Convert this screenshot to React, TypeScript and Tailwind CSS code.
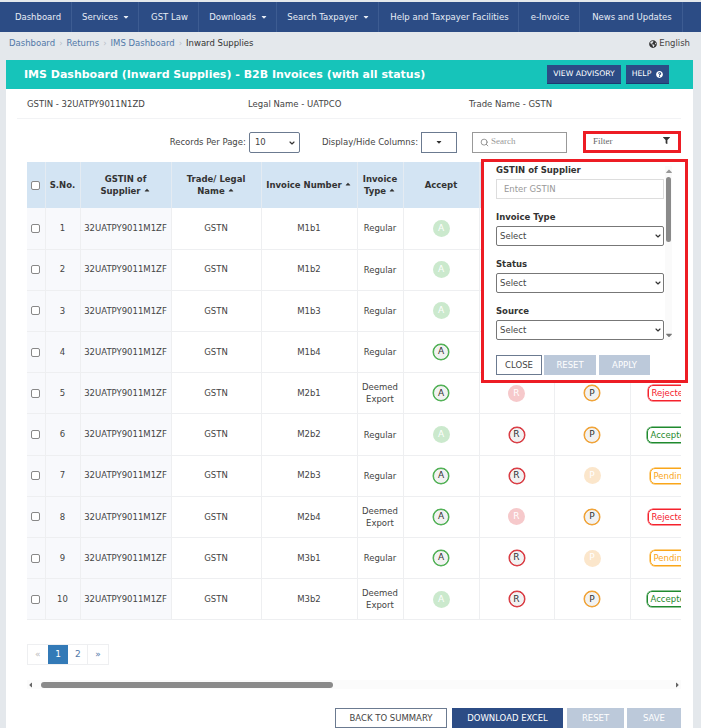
import { FaCaretDown, FaCaretUp, FaFilter, FaGlobeAmericas, FaQuestionCircle } from 'react-icons/fa';
import { ChevronDown, Search } from 'lucide-react';

const navItems = [
  { label: 'Dashboard', width: 'w-[72px] pl-[5px]' },
  { label: 'Services', width: 'w-[67px] pl-[2px]', caret: true },
  { label: 'GST Law', width: 'w-[60px] pl-[2px]' },
  { label: 'Downloads', width: 'w-[78px] pl-[2px]', caret: true },
  { label: 'Search Taxpayer', width: 'w-[102px] pl-[2px]', caret: true },
  { label: 'Help and Taxpayer Facilities', width: 'w-[140px] pl-[2px]' },
  { label: 'e-Invoice', width: 'w-[61px] pl-[2px]' },
  { label: 'News and Updates', width: 'w-[103px] pl-[2px]' },
];

type Row = {
  no: number;
  invoice: string;
  type: string;
  off: 'A' | 'R' | 'P' | '';
  status: 'Rejected' | 'Accepted' | 'Pending' | '';
};

const rows: Row[] = [
  { no: 1, invoice: 'M1b1', type: 'Regular', off: 'A', status: '' },
  { no: 2, invoice: 'M1b2', type: 'Regular', off: 'A', status: '' },
  { no: 3, invoice: 'M1b3', type: 'Regular', off: 'A', status: '' },
  { no: 4, invoice: 'M1b4', type: 'Regular', off: '', status: '' },
  { no: 5, invoice: 'M2b1', type: 'Deemed Export', off: 'R', status: 'Rejected' },
  { no: 6, invoice: 'M2b2', type: 'Regular', off: 'A', status: 'Accepted' },
  { no: 7, invoice: 'M2b3', type: 'Regular', off: 'P', status: 'Pending' },
  { no: 8, invoice: 'M2b4', type: 'Deemed Export', off: 'R', status: 'Rejected' },
  { no: 9, invoice: 'M3b1', type: 'Regular', off: 'P', status: 'Pending' },
  { no: 10, invoice: 'M3b2', type: 'Deemed Export', off: 'A', status: 'Accepted' },
];

const Badge = ({ letter, off }: { letter: 'A' | 'R' | 'P'; off: boolean }) => {
  const on = {
    A: 'border-[#4caf50] ring-[#4caf50]',
    R: 'border-[#d9363e] ring-[#d9363e]',
    P: 'border-[#f0a030] ring-[#f0a030]',
  };
  const faded = {
    A: 'bg-[#cbe9cd]',
    R: 'bg-[#f6c9cb]',
    P: 'bg-[#fbe6cb]',
  };
  if (off) {
    return (
      <span className={`mx-auto flex size-[17px] items-center justify-center rounded-full text-[9px] text-white ${faded[letter]}`}>
        {letter}
      </span>
    );
  }
  return (
    <span className={`mx-auto flex size-[16px] items-center justify-center rounded-full border bg-[#f2f2f2] text-[9px] text-[#333] ring-[0.5px] ${on[letter]}`}>
      {letter}
    </span>
  );
};

const StatusPill = ({ status }: { status: Row['status'] }) => {
  if (status === 'Rejected') {
    return <span className="ml-[17px] block w-[70px] rounded-[5px] border border-[#f5222d] py-[1px] pl-[3px] text-left text-[8.5px] leading-[12px] text-[#f5222d] ring-[0.5px] ring-[#f5222d]">Rejected</span>;
  }
  if (status === 'Accepted') {
    return <span className="ml-[16px] block w-[70px] rounded-[5px] border border-[#1f8a2e] py-[1px] pl-[3px] text-left text-[8.5px] leading-[12px] text-[#1f8a2e] ring-[0.5px] ring-[#1f8a2e]">Accepted</span>;
  }
  if (status === 'Pending') {
    return <span className="ml-[19px] block w-[70px] rounded-[5px] border border-[#faa61a] py-[1px] pl-[3px] text-left text-[8.5px] leading-[12px] text-[#faa61a] ring-[0.5px] ring-[#faa61a]">Pending</span>;
  }
  return null;
};

const Sort = () => <FaCaretUp className="ml-[2px] inline size-[8px] align-baseline text-[#333]" />;

const Select = ({ value, className }: { value: string; className: string }) => (
  <div className={`relative ${className}`}>
    <select className="h-full w-full appearance-none rounded-[2px] border border-[#777] bg-white pl-[3px] text-[8.5px] text-[#444]">
      <option>{value}</option>
    </select>
    <ChevronDown className="pointer-events-none absolute right-[2px] top-[6px] size-[8px] text-[#333]" strokeWidth={3.5} />
  </div>
);

export default function App() {
  return (
    <div className="h-[728px] w-[725px] overflow-hidden bg-white font-['DejaVu_Sans',sans-serif] text-[#444]">
      <div className="h-[728px] w-[701px] bg-[#e4e8ec] pt-[2px]">
        {/* top nav */}
        <nav className="flex h-[30px] bg-[#2c4c85] text-[8.5px] text-[#e8edf5]">
          {navItems.map((item) => (
            <div key={item.label} className={`flex items-center justify-center gap-[4px] border-r border-[#3d5c92] ${item.width}`}>
              {item.label}
              {item.caret && <FaCaretDown className="size-[8px]" />}
            </div>
          ))}
        </nav>

        {/* breadcrumb */}
        <div className="flex h-[26px] items-center justify-between pb-[3px] pl-[9px] pr-[11px] text-[8.5px]">
          <div className="flex items-center gap-[4px] text-[#5178a8]">
            <span>Dashboard</span>
            <span className="text-[#b8c0c8]">›</span>
            <span>Returns</span>
            <span className="text-[#b8c0c8]">›</span>
            <span>IMS Dashboard</span>
            <span className="text-[#b8c0c8]">›</span>
            <span className="text-[#333]">Inward Supplies</span>
          </div>
          <div className="flex items-center gap-[2px] text-[#444]">
            <FaGlobeAmericas className="size-[8px] text-[#333]" />
            English
          </div>
        </div>

        {/* main panel */}
        <div className="relative ml-[6px] mr-[8px] mt-[2px] h-[668px] bg-white">
          <div className="flex h-[29px] items-center justify-between bg-[#16c4ba] pl-[18px] pr-[24px]">
            <h1 className="pt-[1px] text-[11px] font-bold text-white">
              IMS Dashboard (Inward Supplies) - B2B Invoices (with all status)
            </h1>
            <div className="flex gap-[5px] text-[7.7px] text-white">
              <button className="h-[19px] w-[74px] border-b border-[#1c3a70] bg-[#2c4c85]">VIEW ADVISORY</button>
              <button className="flex h-[19px] w-[43px] items-center justify-center gap-[5px] border-b border-[#1c3a70] bg-[#2c4c85]">
                HELP <FaQuestionCircle className="size-[7px]" />
              </button>
            </div>
          </div>

          <div className="ml-[11px] mr-[12px] flex h-[30px] items-center border-b border-[#f2f3f5] pl-[10px] pt-[1px] text-[8.5px]">
            <span className="w-[221px]">GSTIN - 32UATPY9011N1ZD</span>
            <span className="w-[221px]">Legal Name - UATPCO</span>
            <span>Trade Name - GSTN</span>
          </div>

          {/* toolbar */}
          <div className="mr-[12px] mt-[12px] flex h-[22px] items-center justify-end text-[8.5px]">
            <span>Records Per Page:</span>
            <div className="relative ml-[3px] h-[21px] w-[51px]">
              <select className="h-full w-full appearance-none rounded-[2px] border border-[#6b7a90] bg-white pl-[5px] text-[8.5px] text-[#444]">
                <option>10</option>
              </select>
              <ChevronDown className="pointer-events-none absolute right-[4px] top-[7px] size-[8px] text-[#333]" strokeWidth={3.5} />
            </div>
            <span className="ml-[22px]">Display/Hide Columns:</span>
            <button className="ml-[3px] flex h-[21px] w-[36px] items-center justify-center border border-[#6b7a90] bg-white">
              <FaCaretDown className="size-[8px] text-[#333]" />
            </button>
            <div className="ml-[15px] flex h-[21px] w-[95px] items-center gap-[2px] border border-[#999] pl-[7px] font-['Liberation_Serif',serif] text-[9px] text-[#999]">
              <Search className="size-[9px] text-[#777]" />
              Search
            </div>
            <div className="ml-[16px] flex h-[22px] w-[98px] items-center justify-between border-[3px] border-[#ed1c24] pl-[7px] pr-[8px] font-['Liberation_Serif',serif] text-[9px] text-[#666]">
              Filter
              <FaFilter className="mb-[4px] size-[7px] text-[#333]" />
            </div>
          </div>

          {/* table */}
          <div className="ml-[21px] mt-[9px] w-[654px] overflow-hidden">
            <table className="w-[760px] table-fixed border-collapse text-center text-[8.5px]">
              <colgroup>
                <col className="w-[18px]" />
                <col className="w-[35px]" />
                <col className="w-[91px]" />
                <col className="w-[90px]" />
                <col className="w-[96px]" />
                <col className="w-[46px]" />
                <col className="w-[76px]" />
                <col className="w-[75px]" />
                <col className="w-[76px]" />
                <col className="w-[157px]" />
              </colgroup>
              <thead>
                <tr className="h-[46px] bg-[#d3e4f3] font-bold text-[#333]">
                  <th className="border-r border-[#e4ebf2]"><input type="checkbox" className="mx-auto block size-[9px] appearance-none rounded-[2px] border border-[#888] bg-white" /></th>
                  <th className="border-r border-[#e4ebf2]">S.No.</th>
                  <th className="border-r border-[#e4ebf2] leading-[12px]">GSTIN of<br />Supplier<Sort /></th>
                  <th className="border-r border-[#e4ebf2] leading-[12px]">Trade/ Legal<br />Name<Sort /></th>
                  <th className="border-r border-[#e4ebf2]">Invoice Number<Sort /></th>
                  <th className="border-r border-[#e4ebf2] leading-[12px]">Invoice<br />Type<Sort /></th>
                  <th className="border-r border-[#e4ebf2]">Accept</th>
                  <th className="border-r border-[#e4ebf2]" />
                  <th className="border-r border-[#e4ebf2]" />
                  <th />
                </tr>
              </thead>
              <tbody>
                {rows.map((row) => (
                  <tr key={row.no} className="h-[41.2px] border-b-[1.5px] border-[#eeeff1]">
                    <td className="border-r border-[#eeeff1] bg-[#f8f9fc]"><input type="checkbox" className="mx-auto block size-[9px] appearance-none rounded-[2px] border border-[#888] bg-white" /></td>
                    <td className="border-r border-[#eeeff1] bg-[#f8f9fc]">{row.no}</td>
                    <td className="border-r border-[#eeeff1] bg-[#f8f9fc]">32UATPY9011M1ZF</td>
                    <td className="border-r border-[#eeeff1]">GSTN</td>
                    <td className="border-r border-[#eeeff1]">{row.invoice}</td>
                    <td className="border-r border-[#eeeff1] leading-[12px]">{row.type}</td>
                    <td className="border-r border-[#eeeff1]"><Badge letter="A" off={row.off === 'A'} /></td>
                    {/* rows 1-4 sit under the filter popup */}
                    <td className="border-r border-[#eeeff1]">{row.no > 4 && <Badge letter="R" off={row.off === 'R'} />}</td>
                    <td className="border-r border-[#eeeff1]">{row.no > 4 && <Badge letter="P" off={row.off === 'P'} />}</td>
                    <td className="overflow-hidden"><StatusPill status={row.status} /></td>
                  </tr>
                ))}
              </tbody>
            </table>
          </div>

          {/* filter popup */}
          <div className="absolute left-[475px] top-[99px] h-[224px] w-[207px] border-[3px] border-[#ed1c24] bg-white pl-[12px] text-[8.5px]">
            <div className="relative h-[180px] w-[182px] pr-[7px]">
              <div className="flex w-[168px] flex-col pt-[2px]">
                <label className="font-bold leading-[12px] text-[#333]">GSTIN of Supplier</label>
                <div className="mt-[3px] flex h-[20px] items-center border border-[#ddd] pl-[7px] text-[#999]">Enter GSTIN</div>
                <label className="mt-[12px] font-bold leading-[12px] text-[#333]">Invoice Type</label>
                <Select value="Select" className="mt-[3px] h-[20px]" />
                <label className="mt-[12px] font-bold leading-[12px] text-[#333]">Status</label>
                <Select value="Select" className="mt-[3px] h-[20px]" />
                <label className="mt-[12px] font-bold leading-[12px] text-[#333]">Source</label>
                <Select value="Select" className="mt-[3px] h-[20px]" />
              </div>
              {/* scrollbar */}
              <div className="absolute right-[6px] top-[4px] flex h-[174px] w-[7px] flex-col items-center justify-between bg-[#fafafa]">
                <FaCaretUp className="size-[10px] text-[#999]" />
                <div className="absolute top-[11px] h-[65px] w-[5px] rounded-[3px] bg-[#8a8a8a]" />
                <FaCaretDown className="size-[10px] text-[#777]" />
              </div>
            </div>
            <div className="mt-[13px] flex">
              <button className="h-[20px] w-[46px] border border-[#6b7a90] bg-white text-[#444]">CLOSE</button>
              <button className="ml-[2px] h-[20px] w-[52px] bg-[#bcc9da] text-white">RESET</button>
              <button className="ml-[3px] h-[20px] w-[51px] bg-[#bcc9da] text-white">APPLY</button>
            </div>
          </div>

          {/* pagination */}
          <div className="ml-[21px] mt-[24px] flex h-[21px] w-[82px] border border-[#eeeff1] text-[9px] text-[#5178a8]">
            <span className="flex w-[20px] items-center justify-center text-[#bbb]">«</span>
            <span className="flex w-[21px] items-center justify-center bg-[#337ab7] text-white">1</span>
            <span className="flex w-[20px] items-center justify-center border-r border-[#eeeff1]">2</span>
            <span className="flex w-[20px] items-center justify-center">»</span>
          </div>

          {/* horizontal scrollbar */}
          <div className="ml-[21px] mt-[15px] flex h-[9px] w-[654px] items-center bg-[#fbfbfb]">
            <FaCaretDown className="size-[8px] rotate-90 text-[#666]" />
            <div className="ml-[6px] h-[6px] w-[292px] rounded-[3px] bg-[#8a8a8a]" />
            <FaCaretDown className="ml-auto size-[8px] -rotate-90 text-[#666]" />
          </div>

          {/* footer buttons */}
          <div className="mr-[12px] mt-[19px] flex justify-end text-[8.5px]">
            <button className="h-[20px] w-[112px] border border-[#6b7a90] bg-white text-[#444]">BACK TO SUMMARY</button>
            <button className="ml-[5px] h-[20px] w-[111px] bg-[#2c4c85] text-white">DOWNLOAD EXCEL</button>
            <button className="ml-[4px] h-[20px] w-[57px] bg-[#bcc9da] text-white">RESET</button>
            <button className="ml-[3px] h-[20px] w-[54px] bg-[#bcc9da] text-white">SAVE</button>
          </div>
        </div>
      </div>
    </div>
  );
}
